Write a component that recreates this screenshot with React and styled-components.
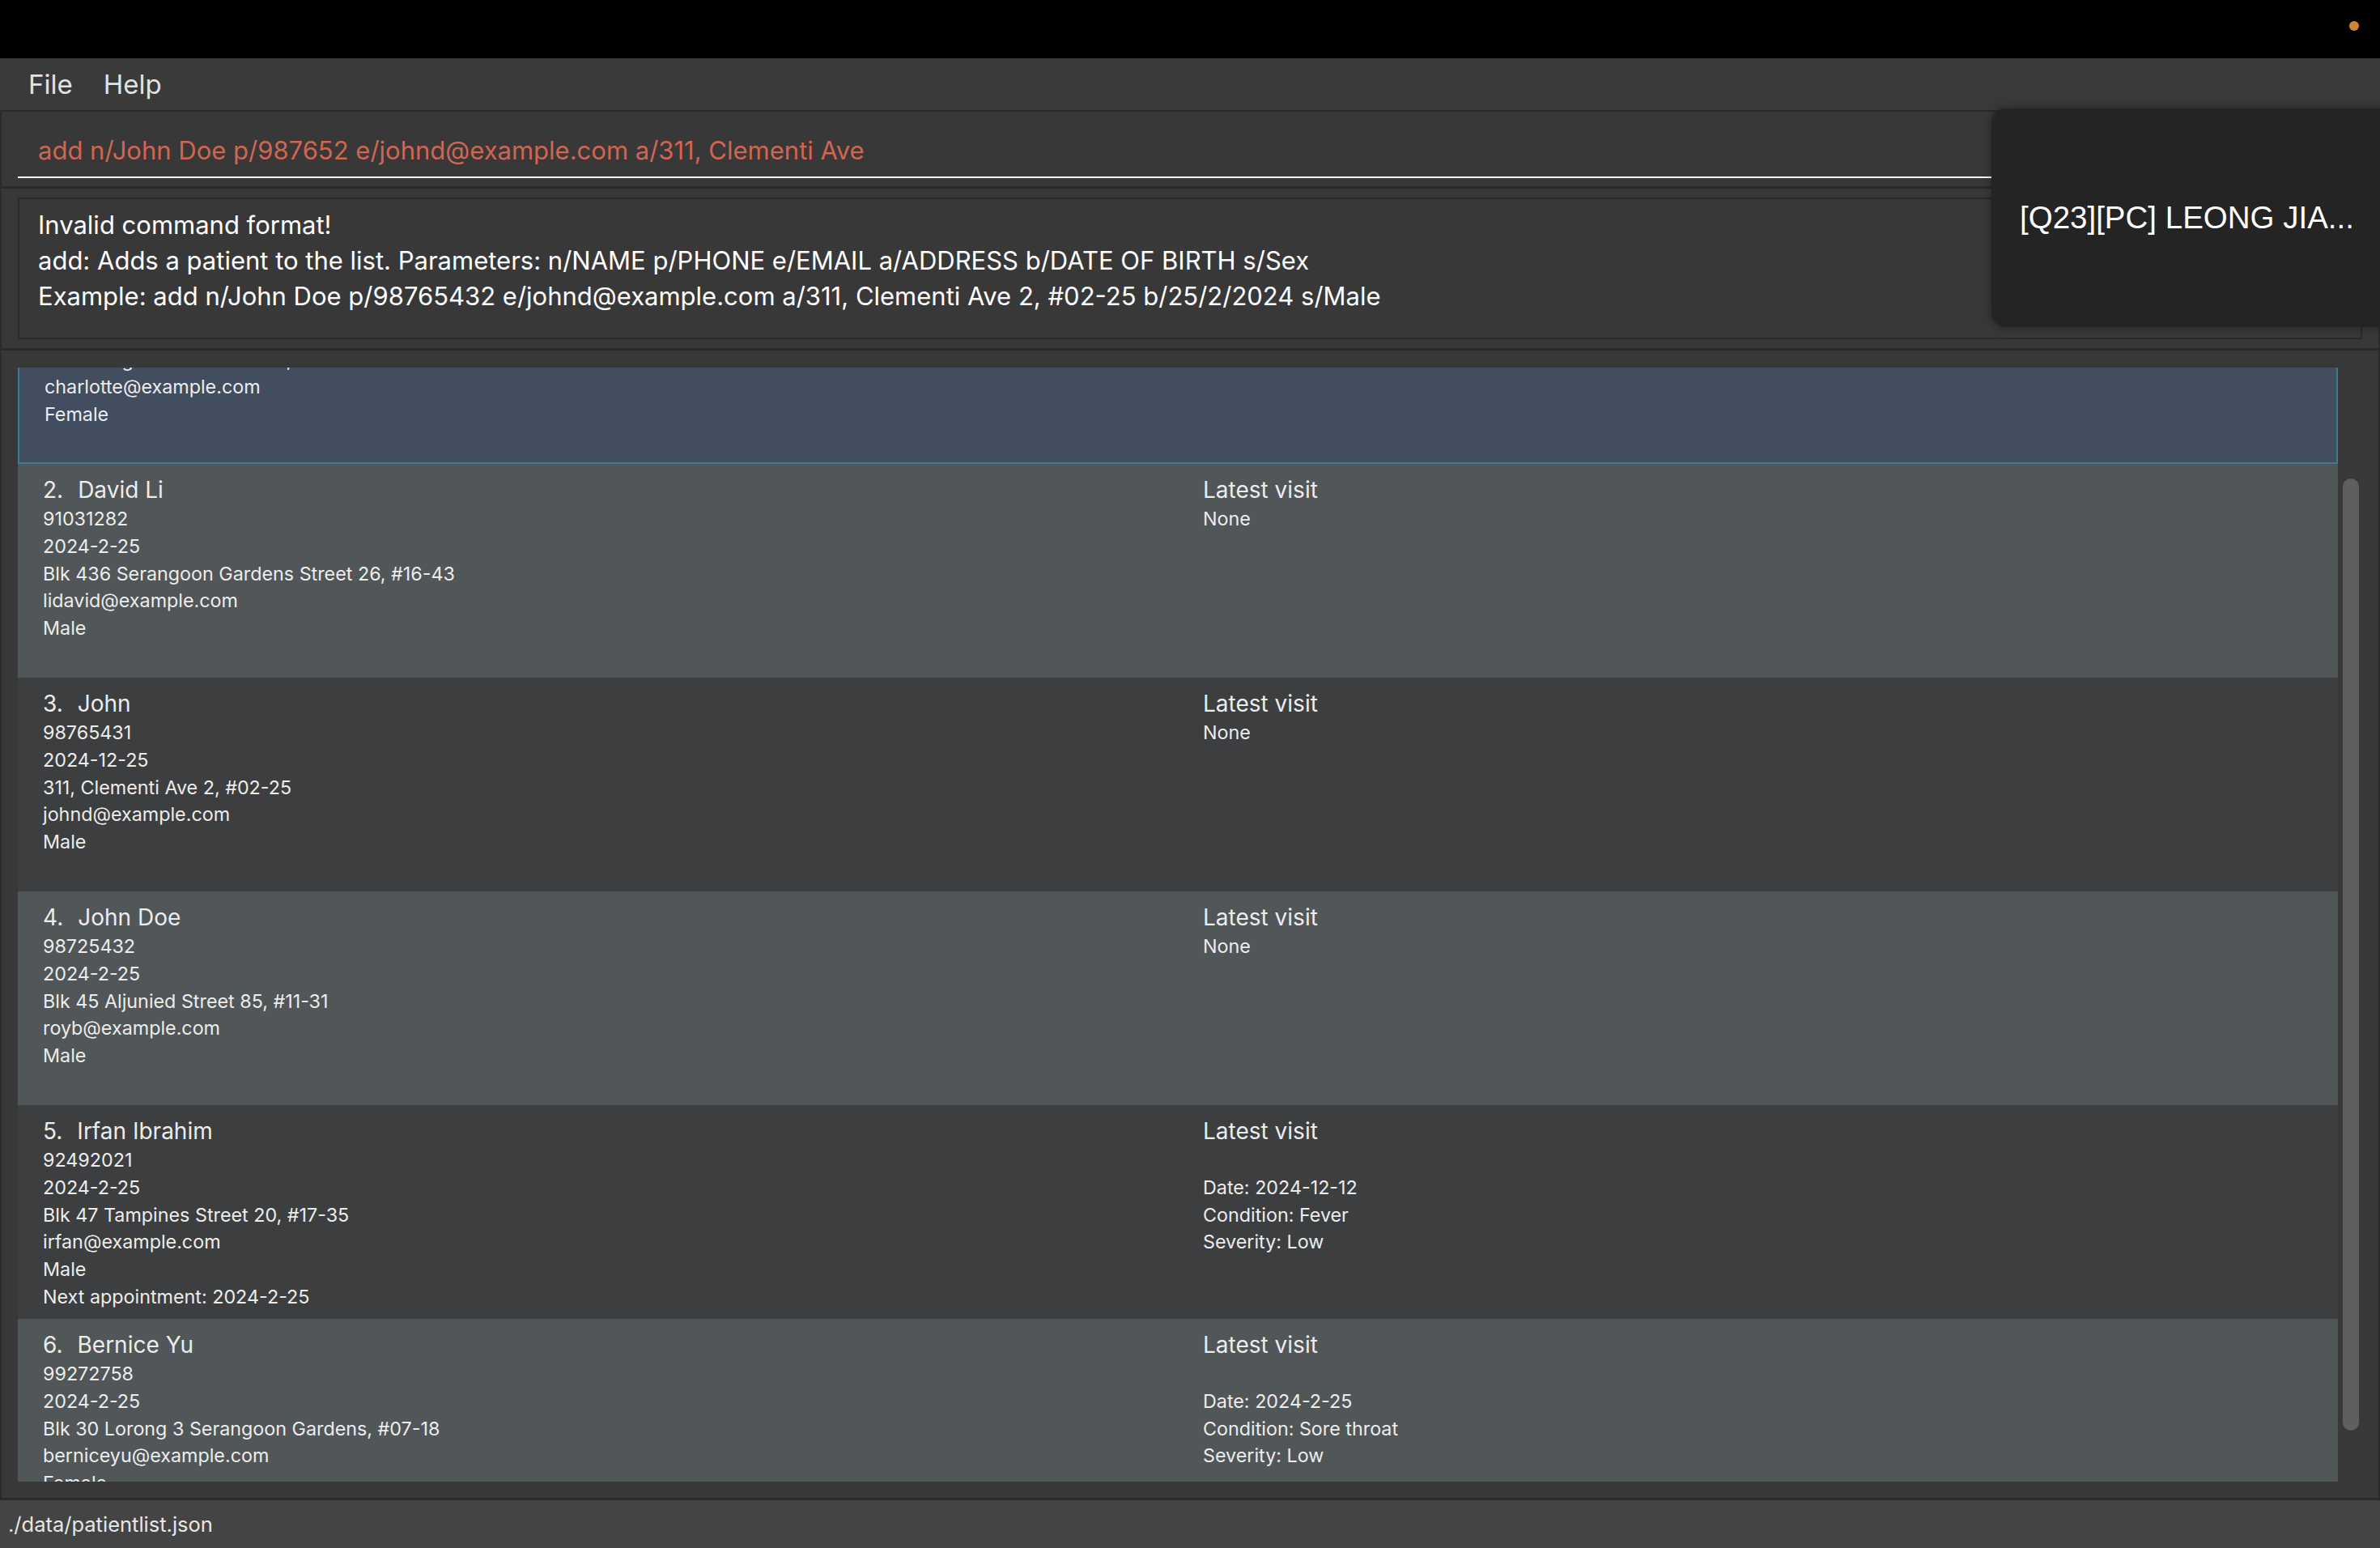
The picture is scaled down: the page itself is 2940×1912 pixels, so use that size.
import React, { useLayoutEffect, useRef } from "react";
import styled, { createGlobalStyle } from "styled-components";

const GlobalStyle = createGlobalStyle`
  html, body {
    margin: 0;
    padding: 0;
    background: #000;
    overflow: hidden;
  }
  body {
    font-family: Inter, "Noto Sans", sans-serif;
  }
  * { box-sizing: border-box; }
`;

const Window = styled.div`
  position: relative;
  width: 2940px;
  height: 1912px;
  display: flex;
  flex-direction: column;
  background: #2a2a2a;
  overflow: hidden;
  font-family: Inter, "Noto Sans", sans-serif;
`;

const TitleBar = styled.div`
  flex: none;
  height: 72px;
  background: #000;
  display: flex;
  justify-content: flex-end;
  align-items: flex-start;
  padding: 26px 26px 0 0;
`;

const RecordingDot = styled.span`
  width: 12px;
  height: 12px;
  border-radius: 50%;
  background: #cf8431;
`;

const MenuBar = styled.nav`
  flex: none;
  height: 64px;
  background: #3a3a3a;
  display: flex;
  align-items: center;
  padding-left: 16px;
`;

const MenuItem = styled.span`
  font-size: 33px;
  line-height: 1;
  color: #e2e2e2;
  padding: 0 19px;
`;

const Pane = styled.section`
  flex: none;
  background: #383838;
  border-left: 2px solid #2c2c2c;
  border-right: 2px solid #2c2c2c;
  border-top: ${(p) => p.$topLine}px solid #2a2a2a;
`;

const CommandPane = styled(Pane)`
  height: 94px;
  padding: 20px 20px 10px 20px;
`;

const CommandField = styled.div`
  height: 62px;
  border-bottom: 2px solid #ffffff;
  padding-left: 25px;
  font-size: 31px;
  line-height: 56px;
  color: #d06651;
  white-space: nowrap;
`;

const ResultPane = styled(Pane)`
  height: 200px;
  padding: 11px 20px;
  display: flex;
`;

const ResultBox = styled.div`
  flex: 1;
  border: 2px solid #2b2b2b;
  padding: 10px 23px 8px;
  font-size: 31px;
  line-height: 44px;
  color: #ffffff;
  white-space: pre-line;
`;

const ListPane = styled(Pane)`
  flex: 1;
  min-height: 0;
  display: flex;
  padding: 21px 0 20px 20px;
`;

const Viewport = styled.div`
  flex: 1;
  overflow: hidden;
`;

const ScrollTrack = styled.div`
  flex: none;
  width: 50px;
  padding-left: 6px;
`;

const ScrollThumb = styled.div`
  width: 20px;
  margin-top: 137px;
  height: 1176px;
  border-radius: 10px;
  background: #5f5f5f;
`;

const CELL_BG = {
  selected: "#424d5f",
  light: "#515658",
  dark: "#3c3e3f",
};

const Cell = styled.div`
  height: 264px;
  background: ${(p) => CELL_BG[p.$tone]};
  border: ${(p) => (p.$tone === "selected" ? "2px solid #3e7b91" : "none")};
  padding-top: ${(p) => (p.$tone === "selected" ? 11 : 13)}px;
  display: grid;
  grid-template-columns: 1fr 1fr;
  overflow: hidden;
  color: #ececec;
`;

const Column = styled.div`
  display: flex;
  flex-direction: column;
  padding: 0 31px;
  min-width: 0;
`;

const Heading = styled.div`
  display: flex;
  gap: 18px;
  font-size: 28px;
  line-height: 38px;
  white-space: nowrap;
`;

const Detail = styled.div`
  font-size: 23.3px;
  line-height: 33.8px;
  min-height: 33.8px;
  white-space: nowrap;
`;

const Popup = styled.div`
  position: absolute;
  top: 134px;
  left: 2460px;
  width: 540px;
  height: 270px;
  border-radius: 18px;
  background: #242424;
  box-shadow: 0 0 14px rgba(0, 0, 0, 0.35);
  display: flex;
  align-items: center;
  padding-left: 35px;
  font-family: "Liberation Sans", Arial, sans-serif;
  font-size: 38.5px;
  color: #ffffff;
  white-space: nowrap;
`;

const StatusBar = styled.footer`
  flex: none;
  height: 62px;
  border-top: 3px solid #2a2a2a;
  background: #444444;
  display: flex;
  align-items: center;
  padding-left: 10px;
  font-size: 25.5px;
  color: #e6e6e6;
`;

const patients = [
  {
    name: "Charlotte Oliveiro",
    phone: "93210283",
    dob: "2024-2-25",
    address: "Blk 11 Ang Mo Kio Street 74, #11-04",
    email: "charlotte@example.com",
    sex: "Female",
  },
  {
    name: "David Li",
    phone: "91031282",
    dob: "2024-2-25",
    address: "Blk 436 Serangoon Gardens Street 26, #16-43",
    email: "lidavid@example.com",
    sex: "Male",
  },
  {
    name: "John",
    phone: "98765431",
    dob: "2024-12-25",
    address: "311, Clementi Ave 2, #02-25",
    email: "johnd@example.com",
    sex: "Male",
  },
  {
    name: "John Doe",
    phone: "98725432",
    dob: "2024-2-25",
    address: "Blk 45 Aljunied Street 85, #11-31",
    email: "royb@example.com",
    sex: "Male",
  },
  {
    name: "Irfan Ibrahim",
    phone: "92492021",
    dob: "2024-2-25",
    address: "Blk 47 Tampines Street 20, #17-35",
    email: "irfan@example.com",
    sex: "Male",
    appointment: "2024-2-25",
    visit: { date: "2024-12-12", condition: "Fever", severity: "Low" },
  },
  {
    name: "Bernice Yu",
    phone: "99272758",
    dob: "2024-2-25",
    address: "Blk 30 Lorong 3 Serangoon Gardens, #07-18",
    email: "berniceyu@example.com",
    sex: "Female",
    visit: { date: "2024-2-25", condition: "Sore throat", severity: "Low" },
  },
];

function PatientCard({ index, patient, tone }) {
  return (
    <Cell $tone={tone}>
      <Column>
        <Heading>
          <span>{index}.</span>
          <span>{patient.name}</span>
        </Heading>
        <Detail>{patient.phone}</Detail>
        <Detail>{patient.dob}</Detail>
        <Detail>{patient.address}</Detail>
        <Detail>{patient.email}</Detail>
        <Detail>{patient.sex}</Detail>
        {patient.appointment && <Detail>Next appointment: {patient.appointment}</Detail>}
      </Column>
      <Column>
        <Heading>Latest visit</Heading>
        {patient.visit ? (
          <>
            <Detail />
            <Detail>Date: {patient.visit.date}</Detail>
            <Detail>Condition: {patient.visit.condition}</Detail>
            <Detail>Severity: {patient.visit.severity}</Detail>
          </>
        ) : (
          <Detail>None</Detail>
        )}
      </Column>
    </Cell>
  );
}

const SCROLL_OFFSET = 145;

export default function App() {
  const viewportRef = useRef(null);

  useLayoutEffect(() => {
    if (viewportRef.current) viewportRef.current.scrollTop = SCROLL_OFFSET;
  }, []);

  return (
    <>
      <GlobalStyle />
      <Window>
        <TitleBar>
          <RecordingDot />
        </TitleBar>
        <MenuBar>
          <MenuItem>File</MenuItem>
          <MenuItem>Help</MenuItem>
        </MenuBar>
        <CommandPane $topLine={2}>
          <CommandField>add n/John Doe p/987652 e/johnd@example.com a/311, Clementi Ave</CommandField>
        </CommandPane>
        <ResultPane $topLine={3}>
          <ResultBox>
            {"Invalid command format!\nadd: Adds a patient to the list. Parameters: n/NAME p/PHONE e/EMAIL a/ADDRESS b/DATE OF BIRTH s/Sex\nExample: add n/John Doe p/98765432 e/johnd@example.com a/311, Clementi Ave 2, #02-25 b/25/2/2024 s/Male"}
          </ResultBox>
        </ResultPane>
        <ListPane $topLine={3}>
          <Viewport ref={viewportRef}>
            {patients.map((p, i) => (
              <PatientCard
                key={p.name}
                index={i + 1}
                patient={p}
                tone={i === 0 ? "selected" : i % 2 === 1 ? "light" : "dark"}
              />
            ))}
          </Viewport>
          <ScrollTrack>
            <ScrollThumb />
          </ScrollTrack>
        </ListPane>
        <StatusBar>./data/patientlist.json</StatusBar>
        <Popup>[Q23][PC] LEONG JIA...</Popup>
      </Window>
    </>
  );
}
